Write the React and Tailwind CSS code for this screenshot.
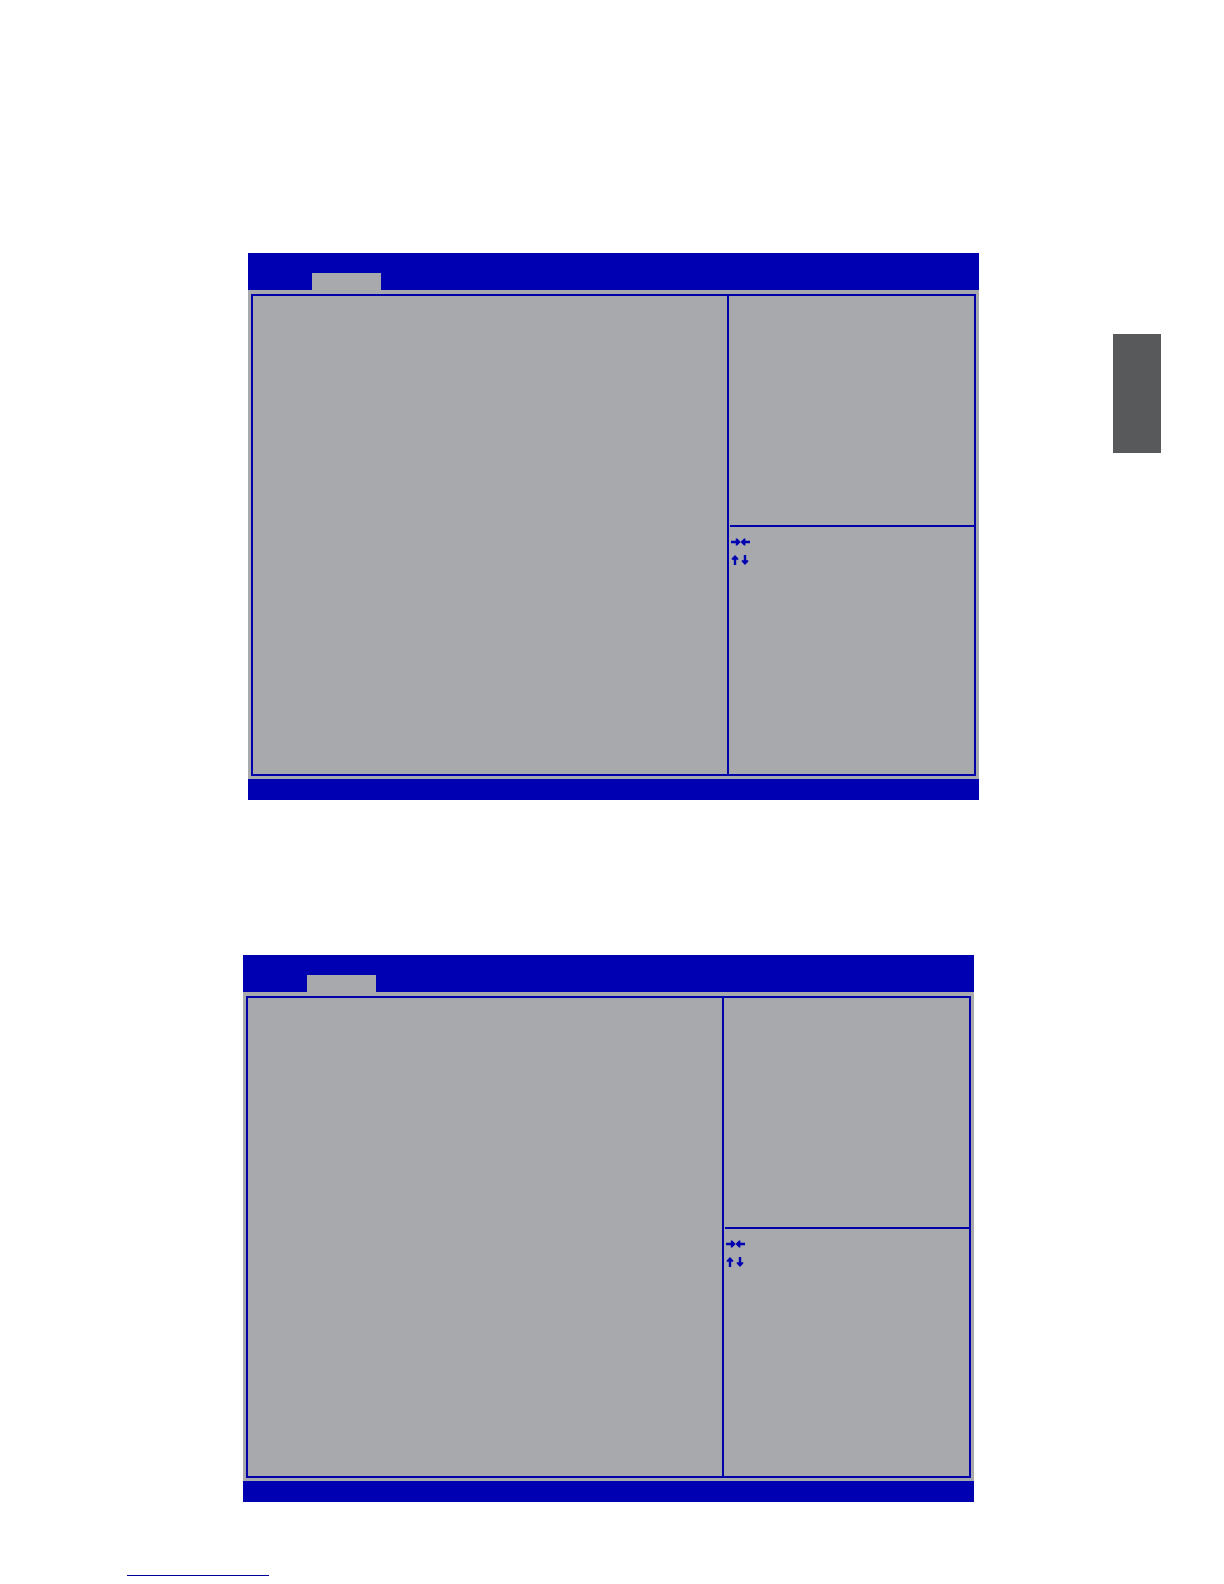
import clsx from "clsx";

function HorizontalArrows() {
  return (
    <svg width="20" height="8" viewBox="0 0 20 8" className="block fill-[#0000b3]" aria-hidden="true">
      <path d="M0 2.8H4.8V0.6H6.2L9.7 4L6.2 7.4H4.8V5.2H0Z" />
      <path d="M19 2.8H14.4V0.6H13L9.5 4L13 7.4H14.4V5.2H19Z" />
    </svg>
  );
}

function VerticalArrows() {
  return (
    <svg width="20" height="10" viewBox="0 0 20 10" className="block fill-[#0000b3]" aria-hidden="true">
      <path d="M4 0L7.3 3.4V4.8H5.2V10H2.8V4.8H0.7V3.4Z" />
      <path d="M14 10L17.3 6.6V5.2H15.2V0H12.8V5.2H10.7V6.6Z" />
    </svg>
  );
}

function BiosScreen({ className }) {
  return (
    <section className={clsx("flex flex-col bg-[#a7a9ac]", className)}>
      <header className="flex h-[37px] items-end bg-[#0000b3] pl-16">
        <div className="h-[17px] w-[69px] bg-[#a7a9ac]" />
      </header>

      <div className="px-[3px] pt-1 pb-[3px]">
        <div className="flex min-h-[482px] border-2 border-[#0000aa]">
          <div className="flex-1" />
          <aside className="flex w-[247px] flex-col border-l-2 border-[#0000aa]">
            <div className="h-[229px]" />
            <ul className="ml-px flex-1 border-t-2 border-[#0000aa] pt-1.5 pl-px">
              <li className="flex h-[18px] items-center">
                <HorizontalArrows />
              </li>
              <li className="flex h-[18px] items-center">
                <VerticalArrows />
              </li>
            </ul>
          </aside>
        </div>
      </div>

      <footer className="h-[21px] bg-[#0000b3]" />
    </section>
  );
}

export default function App() {
  return (
    <div className="min-h-screen bg-white">
      <div className="flex pt-[253px]">
        <main className="flex-1 pl-[243px]">
          <BiosScreen className="ml-[5px]" />
          <BiosScreen className="mt-[155px] mr-[5px]" />
        </main>
        {/* thumb index on the page edge */}
        <aside className="w-[245px] pt-[81px] pr-[63px] pl-[134px]">
          <div className="h-[119px] bg-[#58595b]" />
        </aside>
      </div>

      <hr className="mt-[73px] mb-2 ml-[127px] w-[142px] border-t border-[#00009a]" />
    </div>
  );
}
